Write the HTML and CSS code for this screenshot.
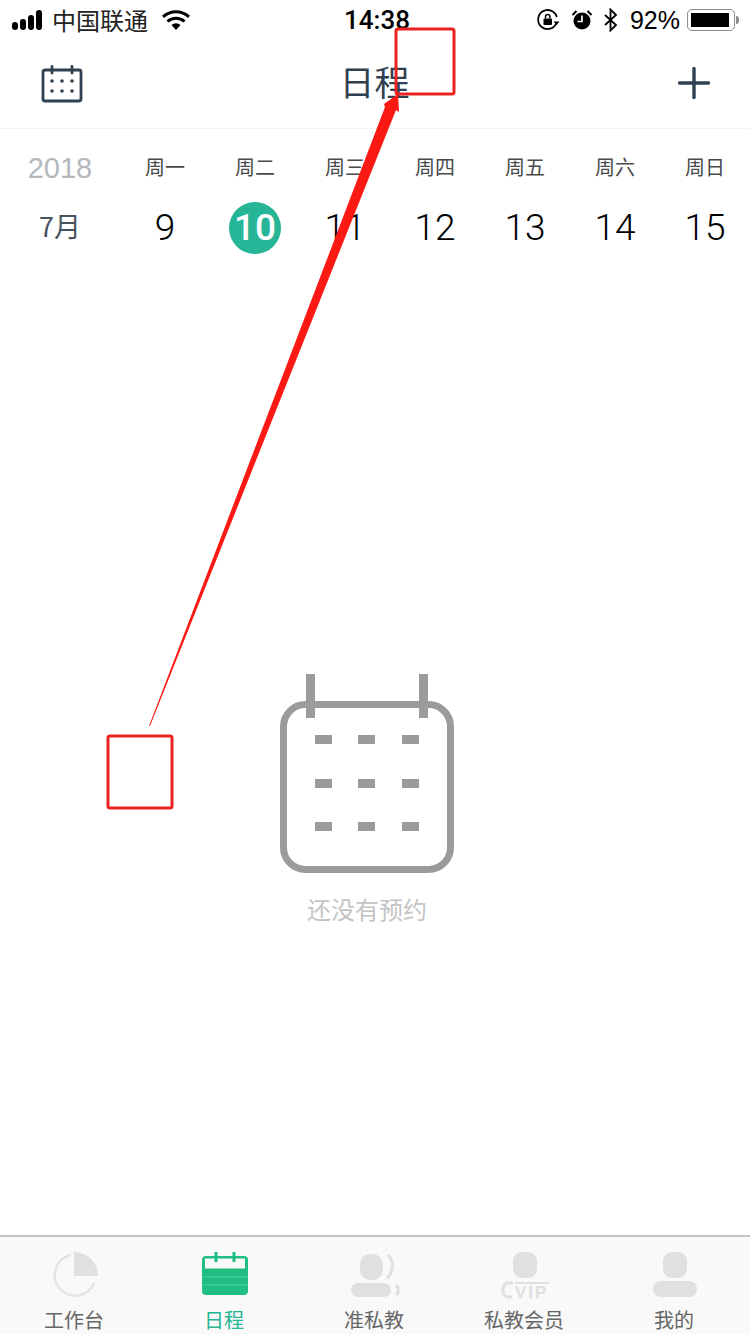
FILE: index.html
```html
<!DOCTYPE html>
<html lang="zh-CN">
<head>
    <meta charset="UTF-8">
    <meta name="viewport" content="width=device-width, initial-scale=1.0">
    <title>日程</title>
    <link rel="stylesheet" href="styles.css">
</head>
<body>
    <div class="page">
        <div class="status-bar">
            <div class="status-left">
                <span class="signal"><i></i><i></i><i></i><i></i></span>
                <span class="carrier">中国联通</span>
                <svg class="wifi" width="28" height="20" viewBox="0 0 28 20">
                    <path d="M14 20 9.500 15a6.500 6.500 0 0 1 9 0z" fill="#000"/>
                    <path d="M5.500 11.500a12.500 12.500 0 0 1 17 0" fill="none" stroke="#000" stroke-width="3"/>
                    <path d="M1 6.800a19 19 0 0 1 26 0" fill="none" stroke="#000" stroke-width="3"/>
                </svg>
            </div>
            <div class="status-time">14:38</div>
            <div class="status-right">
                <svg width="24" height="24" viewBox="0 0 24 24">
                    <path d="M20.500 15a9.500 9.500 0 1 1 .3-6" fill="none" stroke="#000" stroke-width="1.800"/>
                    <path d="M17.500 13.500h6l-3 3.500z" fill="#000"/>
                    <rect x="7.500" y="10.500" width="8.500" height="6.500" rx="1" fill="#000"/>
                    <path d="M9.500 10.500V8.600a2.200 2.200 0 0 1 4.400 0v1.900" fill="none" stroke="#000" stroke-width="1.500"/>
                </svg>
                <svg class="alarm" width="22" height="22" viewBox="0 0 22 22">
                    <circle cx="11" cy="12" r="8.500" fill="#000"/>
                    <path d="M11 6.500V12.500H6.500" fill="none" stroke="#fff" stroke-width="1.700"/>
                    <path d="M1.500 6 5.500 2M20.500 6l-4-4" stroke="#000" stroke-width="2"/>
                </svg>
                <svg class="bt" width="16" height="24" viewBox="0 0 16 24">
                    <path d="M2 7 13 17 7.500 22.500V1.500L13 7 2 17" fill="none" stroke="#000" stroke-width="1.800"/>
                </svg>
                <span class="battery-pct">92%</span>
                <span class="battery"><span class="battery-fill"></span></span>
                <span class="battery-tip"></span>
            </div>
        </div>

        <header class="nav-bar">
            <svg class="nav-calendar" width="42" height="38" viewBox="0 0 42 38">
                <rect x="2" y="5" width="38" height="31" rx="2" fill="none" stroke="#2f4050" stroke-width="2.800"/>
                <path d="M11 1.500V8M31 1.500V8" stroke="#2f4050" stroke-width="2.800" stroke-linecap="round"/>
                <g fill="#2f4050">
                    <circle cx="11" cy="16" r="1.800"/><circle cx="21" cy="16" r="1.800"/><circle cx="31" cy="16" r="1.800"/>
                    <circle cx="11" cy="26" r="1.800"/><circle cx="21" cy="26" r="1.800"/><circle cx="31" cy="26" r="1.800"/>
                </g>
            </svg>
            <h1 class="nav-title">日程</h1>
            <svg class="nav-add" width="32" height="32" viewBox="0 0 32 32">
                <path d="M16 1.500v29M1.500 16h29" stroke="#2f4050" stroke-width="3.400" stroke-linecap="round"/>
            </svg>
        </header>

        <section class="week">
            <div class="week-col week-first">
                <div class="year">2018</div>
                <div class="month">7月</div>
            </div>
            <div class="week-col"><div class="weekday">周一</div><div class="day">9</div></div>
            <div class="week-col"><div class="weekday">周二</div><div class="day today">10</div></div>
            <div class="week-col"><div class="weekday">周三</div><div class="day">11</div></div>
            <div class="week-col"><div class="weekday">周四</div><div class="day">12</div></div>
            <div class="week-col"><div class="weekday">周五</div><div class="day">13</div></div>
            <div class="week-col"><div class="weekday">周六</div><div class="day">14</div></div>
            <div class="week-col"><div class="weekday">周日</div><div class="day">15</div></div>
        </section>

        <main class="empty">
            <svg width="176" height="200" viewBox="0 0 176 200">
                <rect x="4.500" y="30.500" width="167" height="165" rx="22" fill="none" stroke="#9b9b9b" stroke-width="7"/>
                <path d="M31.500 0v44M144.500 0v44" stroke="#9b9b9b" stroke-width="9"/>
                <g fill="#9b9b9b">
                    <rect x="36" y="61" width="17" height="9"/><rect x="79" y="61" width="17" height="9"/><rect x="123" y="61" width="17" height="9"/>
                    <rect x="36" y="105" width="17" height="9"/><rect x="79" y="105" width="17" height="9"/><rect x="123" y="105" width="17" height="9"/>
                    <rect x="36" y="148" width="17" height="9"/><rect x="79" y="148" width="17" height="9"/><rect x="123" y="148" width="17" height="9"/>
                </g>
            </svg>
            <p class="empty-text">还没有预约</p>
        </main>

        <nav class="tab-bar">
            <div class="tab">
                <svg width="48" height="48" viewBox="0 0 48 48">
                    <path d="M20 3a20.500 20.500 0 1 0 23.500 27" fill="none" stroke="#e4e4e4" stroke-width="2.500"/>
                    <path d="M23 0a24 24 0 0 1 24 24H23z" fill="#e0e0e0"/>
                </svg>
                <span>工作台</span>
            </div>
            <div class="tab tab-active">
                <svg width="48" height="48" viewBox="0 0 48 48">
                    <path d="M5 4h38a4 4 0 0 1 4 4v31a4 4 0 0 1-4 4H5a4 4 0 0 1-4-4V8a4 4 0 0 1 4-4z" fill="#1fbf83"/>
                    <rect x="4" y="6.500" width="40" height="10" fill="#f9f9f9"/>
                    <path d="M15 0v10M33 0v10" stroke="#1fbf83" stroke-width="3"/>
                    <path d="M1 25h46M1 33h46" stroke="#3fcb96" stroke-width="1.500"/>
                </svg>
                <span>日程</span>
            </div>
            <div class="tab">
                <svg class="tab-coach" width="54" height="48" viewBox="0 0 54 48">
                    <rect x="10" y="2" width="23" height="26" rx="10" fill="#e0e0e0"/>
                    <rect x="1" y="31" width="40" height="14" rx="7" fill="#e0e0e0"/>
                    <path d="M38 3c6 6 6 17-1 23" fill="none" stroke="#e0e0e0" stroke-width="3"/>
                    <path d="M46 33c3 2 3 8 0 10" fill="none" stroke="#e0e0e0" stroke-width="3"/>
                </svg>
                <span>准私教</span>
            </div>
            <div class="tab">
                <svg class="tab-vip" width="48" height="52" viewBox="0 0 48 52">
                    <rect x="12" y="0" width="24" height="26" rx="9" fill="#e0e0e0"/>
                    <path d="M12 31H5c-5 5-4 12 1 14h5" fill="none" stroke="#e0e0e0" stroke-width="3"/>
                    <path d="M14 31h34" stroke="#e0e0e0" stroke-width="2"/>
                    <text class="vip" x="14" y="46">VIP</text>
                </svg>
                <span>私教会员</span>
            </div>
            <div class="tab">
                <svg width="46" height="48" viewBox="0 0 46 48">
                    <rect x="11" y="0" width="24" height="26" rx="9" fill="#e0e0e0"/>
                    <rect x="1" y="29" width="44" height="16" rx="8" fill="#e0e0e0"/>
                </svg>
                <span>我的</span>
            </div>
        </nav>

        <!-- red markup drawn on top of the screenshot -->
        <svg class="markup" width="750" height="1334" viewBox="0 0 750 1334">
            <rect x="396" y="29" width="58" height="65" rx="2" fill="none" stroke="#ea2220" stroke-width="3"/>
            <rect x="108" y="736" width="64" height="72" rx="2" fill="none" stroke="#ea2220" stroke-width="3"/>
            <path d="M149 726 385 107 384 104 398 94 399 112 396 110 150 726z" fill="#fb1a13"/>
        </svg>
    </div>
</body>
</html>
```

FILE: styles.css
```css
* {
    box-sizing: border-box;
}
body {
    margin: 0;
    background-color: #fff;
    font-family: "Liberation Sans", "Noto Sans CJK SC", sans-serif;
}
.page {
    position: relative;
    display: flex;
    flex-direction: column;
    width: 750px;
    height: 1334px;
    overflow: hidden;
}

/* status bar */
.status-bar {
    position: relative;
    display: flex;
    justify-content: space-between;
    align-items: center;
    height: 40px;
    padding: 0 11px 0 12px;
    color: #000;
    font-size: 24px;
}
.status-left,
.status-right {
    display: flex;
    align-items: center;
}
.signal {
    display: flex;
    align-items: flex-end;
    gap: 2px;
    height: 20px;
}
.signal i {
    display: block;
    width: 6px;
    background-color: #000;
    border-radius: 3px;
}
.signal i:nth-child(1) { height: 8px; }
.signal i:nth-child(2) { height: 11px; }
.signal i:nth-child(3) { height: 15px; }
.signal i:nth-child(4) { height: 20px; }
.carrier {
    margin-left: 10px;
    color: #222;
    font-family: "Noto Sans CJK SC", sans-serif;
    line-height: 30px;
}
.wifi {
    margin-left: 14px;
}
.status-time {
    position: absolute;
    left: 344px;
    top: 5px;
    font-family: "Roboto", sans-serif;
    font-weight: 500;
    font-size: 26px;
    line-height: 30px;
}
.alarm {
    margin-left: 11px;
}
.bt {
    margin-left: 10px;
}
.battery-pct {
    margin-left: 11px;
    font-size: 25px;
}
.battery {
    display: flex;
    align-items: center;
    width: 48px;
    height: 22px;
    margin-left: 7px;
    padding: 3px;
    border: 1.5px solid #8e8e8e;
    border-radius: 5px;
}
.battery-fill {
    width: 38px;
    height: 100%;
    background-color: #000;
}
.battery-tip {
    width: 3px;
    height: 8px;
    margin-left: 1px;
    background-color: #8e8e8e;
    border-radius: 0 3px 3px 0;
}

/* nav bar */
.nav-bar {
    display: flex;
    justify-content: space-between;
    align-items: center;
    height: 89px;
    padding: 0 40px 0 41px;
    border-bottom: 1px solid #f3f3f3;
}
.nav-calendar {
    margin-top: -1px;
}
.nav-add {
    margin-top: -2px;
}
.nav-title {
    margin: -8px 0 0 -12px;
    color: #2f4050;
    font-family: "Noto Sans CJK SC", sans-serif;
    font-size: 35px;
    font-weight: normal;
}

/* week strip */
.week {
    display: flex;
    padding-top: 19px;
}
.week-col {
    display: flex;
    flex-direction: column;
    align-items: center;
    width: 90px;
}
.week-first {
    width: 120px;
}
.year {
    height: 40px;
    color: #b4b8bc;
    font-size: 29px;
    line-height: 40px;
}
.month {
    height: 52px;
    margin-top: 13px;
    color: #47525c;
    font-family: "Noto Sans CJK SC", sans-serif;
    font-size: 27px;
    line-height: 50px;
}
.weekday {
    height: 40px;
    color: #4a4a4a;
    font-family: "Noto Sans CJK SC", sans-serif;
    font-size: 20px;
    line-height: 38px;
}
.day {
    width: 52px;
    height: 52px;
    margin-top: 14px;
    color: #000;
    font-family: "Roboto", sans-serif;
    font-size: 37px;
    font-weight: 300;
    line-height: 52px;
    text-align: center;
}
.today {
    background-color: #26b597;
    border-radius: 50%;
    color: #fff;
    font-weight: 500;
}

/* empty state */
.empty {
    display: flex;
    flex: 1;
    flex-direction: column;
    align-items: center;
    padding: 420px 16px 0 0;
}
.empty-text {
    margin: 18px 0 0;
    color: #c4c4c4;
    font-family: "Noto Sans CJK SC", sans-serif;
    font-size: 24px;
    line-height: 34px;
}

/* tab bar */
.tab-bar {
    display: flex;
    justify-content: center;
    height: 99px;
    padding: 15px 2px 0 0;
    background-color: #f9f9f9;
    border-top: 2px solid #c4c4c4;
}
.tab {
    display: flex;
    flex: none;
    flex-direction: column;
    align-items: center;
    width: 150px;
    color: #666;
    font-family: "Noto Sans CJK SC", sans-serif;
    font-size: 20px;
}
.tab svg {
    flex: none;
    margin-left: 2px;
}
.tab span {
    margin-top: 5px;
    line-height: 30px;
}
.tab .tab-coach {
    margin-left: 6px;
}
.tab .tab-vip {
    margin-bottom: -4px;
}
.tab-active {
    color: #26b597;
}
.vip {
    fill: #e0e0e0;
    font-family: "Liberation Sans", sans-serif;
    font-size: 17px;
    font-weight: bold;
    letter-spacing: 2px;
}

/* markup layer */
.markup {
    position: absolute;
    left: 0;
    top: 0;
}
```
